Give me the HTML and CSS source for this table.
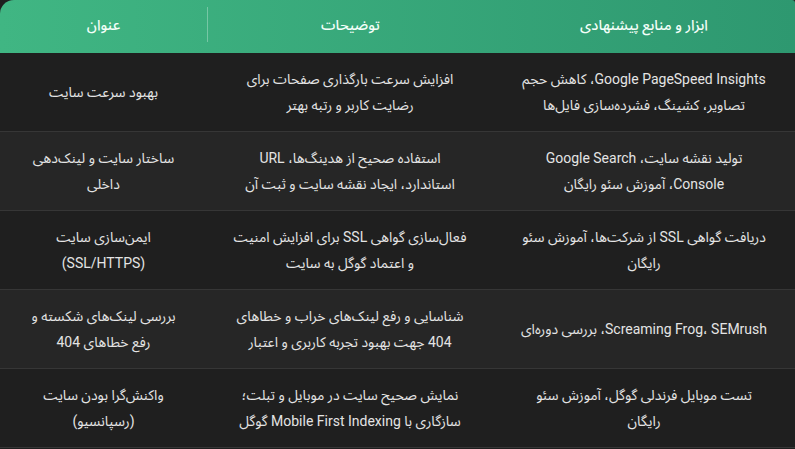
FILE: index.html
```html
<!DOCTYPE html>
<html lang="fa" dir="rtl">
<head>
<meta charset="utf-8">
<title>ابزار و منابع پیشنهادی</title>
<link rel="stylesheet" href="styles.css">
</head>
<body>
<div class="table">
  <div class="head">
    <div class="hcell">ابزار و منابع پیشنهادی</div>
    <div class="hcell hcell-div">توضیحات</div>
    <div class="hcell">عنوان</div>
  </div>
  <div class="row odd">
    <div class="cell">Google PageSpeed Insights، کاهش حجم<br>تصاویر، کشینگ، فشرده‌سازی فایل‌ها</div>
    <div class="cell">افزایش سرعت بارگذاری صفحات برای<br>رضایت کاربر و رتبه بهتر</div>
    <div class="cell">بهبود سرعت سایت</div>
  </div>
  <div class="row even">
    <div class="cell">تولید نقشه سایت، Google Search<br>Console، آموزش سئو رایگان</div>
    <div class="cell">استفاده صحیح از هدینگ‌ها، URL<br>استاندارد، ایجاد نقشه سایت و ثبت آن</div>
    <div class="cell">ساختار سایت و لینک‌دهی<br>داخلی</div>
  </div>
  <div class="row odd">
    <div class="cell">دریافت گواهی SSL از شرکت‌ها، آموزش سئو<br>رایگان</div>
    <div class="cell">فعال‌سازی گواهی SSL برای افزایش امنیت<br>و اعتماد گوگل به سایت</div>
    <div class="cell">ایمن‌سازی سایت<br>(SSL/HTTPS)</div>
  </div>
  <div class="row even">
    <div class="cell">Screaming Frog، SEMrush، بررسی دوره‌ای</div>
    <div class="cell">شناسایی و رفع لینک‌های خراب و خطاهای<br>404 جهت بهبود تجربه کاربری و اعتبار</div>
    <div class="cell">بررسی لینک‌های شکسته و<br>رفع خطاهای 404</div>
  </div>
  <div class="row odd">
    <div class="cell">تست موبایل فرندلی گوگل، آموزش سئو<br>رایگان</div>
    <div class="cell">نمایش صحیح سایت در موبایل و تبلت؛<br>سازگاری با Mobile First Indexing گوگل</div>
    <div class="cell">واکنش‌گرا بودن سایت<br>(رسپانسیو)</div>
  </div>
</div>
</body>
</html>
```
FILE: styles.css
```css
html, body {
  margin: 0;
  padding: 0;
  background: #1f1f1f;
}
body {
  font-family: Roboto, "Noto Sans Arabic", "DejaVu Sans", sans-serif;
  font-size: 14px;
  color: #e4e4e4;
  direction: rtl;
}
.table {
  width: 795px;
}
.head,
.row {
  display: grid;
  grid-template-columns: 302px 286px 207px;
}
.head {
  height: 53px;
  padding: 7px 0 11px;
  box-sizing: border-box;
  background: linear-gradient(to left, #2e9870, #40b683);
  border-radius: 14px 3px 0 0;
  color: #f4fff9;
  font-weight: 500;
  font-size: 14.5px;
}
.hcell {
  display: flex;
  align-items: center;
  justify-content: center;
  padding-top: 1px;
}
.hcell-div {
  border-left: 1px solid rgba(255, 255, 255, 0.3);
}
.row {
  height: 79px;
  box-sizing: border-box;
  border-bottom: 1px solid #363636;
}
.row.odd { background: #1f1f1f; }
.row.even { background: #262626; }
.cell {
  display: flex;
  align-items: center;
  justify-content: center;
  text-align: center;
  line-height: 26px;
  padding: 0 8px;
}
```
